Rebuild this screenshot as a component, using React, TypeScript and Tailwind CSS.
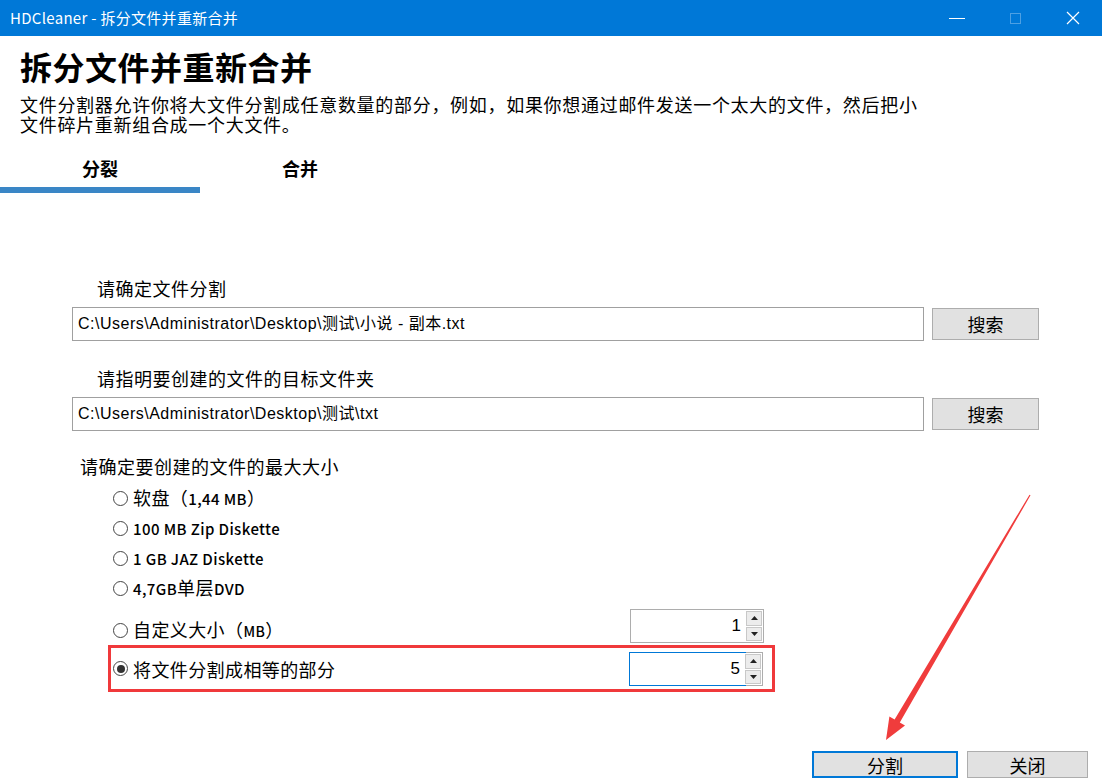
import React from 'react';

const cjk = "font-['Microsoft_YaHei','Noto_Sans_CJK_SC',sans-serif]";
const mono = "font-['Liberation_Sans','Noto_Sans_CJK_SC',sans-serif]";

function Radio({ checked, label }: { checked?: boolean; label: React.ReactNode }) {
  return (
    <div className="flex items-center">
      <span className="flex h-[15px] w-[15px] items-center justify-center rounded-full border border-[#444] bg-white">
        {checked && <span className="h-[8px] w-[8px] rounded-full bg-[#333]" />}
      </span>
      <span className="ml-[5px] text-[18px] leading-[22px] tracking-[0.4px] text-black">{label}</span>
    </div>
  );
}

function Spinner({ value, focused }: { value: string; focused?: boolean }) {
  return (
    <div className="flex h-[34px] w-[134px] border border-[#adadad] bg-white">
      <div
        className={`flex flex-1 items-center justify-end pr-[5px] text-[17px] ${mono} ${
          focused ? 'border border-[#0078d7] -m-px' : ''
        }`}
      >
        {value}
      </div>
      <div className="flex w-[17px] flex-col gap-px bg-white py-px pr-px">
        <div className="flex flex-1 items-center justify-center border border-[#c8c8c8] bg-[#ececec]">
          <svg width="7" height="4" viewBox="0 0 7 4">
            <path d="M3.5 0 L7 4 L0 4 Z" fill="#222" />
          </svg>
        </div>
        <div className="flex flex-1 items-center justify-center border border-[#c8c8c8] bg-[#ececec]">
          <svg width="7" height="4" viewBox="0 0 7 4">
            <path d="M0 0 L7 0 L3.5 4 Z" fill="#222" />
          </svg>
        </div>
      </div>
    </div>
  );
}

function PathRow({ value }: { value: string }) {
  return (
    <div className="flex items-center">
      <div className={`ml-[72px] flex h-[34px] w-[852px] items-center border border-[#a0a0a0] bg-white pl-[5px] text-[16px] tracking-[0.5px] text-black ${mono}`}>
        {value}
      </div>
      <button className="ml-[8px] h-[32px] w-[107px] border border-[#adadad] bg-[#e1e1e1] text-[18px] text-black">
        搜索
      </button>
    </div>
  );
}

export default function App() {
  return (
    <div className={`relative h-[781px] w-[1102px] overflow-hidden bg-white ${cjk}`}>
      {/* 标题栏 */}
      <div className="flex h-[36px] items-center bg-[#0078d7] text-white">
        <span className="pl-[10px] text-[15px] tracking-[0.3px]">HDCleaner - 拆分文件并重新合并</span>
        <div className="ml-auto flex h-full">
          <div className="flex w-[58px] items-center justify-center">
            <span className="mt-[1px] h-px w-[16px] bg-white" />
          </div>
          <div className="flex w-[58px] items-center justify-center">
            <span className="h-[11px] w-[11px] border border-white/30" />
          </div>
          <div className="flex w-[58px] items-center justify-center">
            <svg width="14" height="14" viewBox="0 0 14 14">
              <path d="M1 1 L13 13 M13 1 L1 13" stroke="white" strokeWidth="1.2" />
            </svg>
          </div>
        </div>
      </div>

      {/* 标题与说明 */}
      <h1 className="mt-[12px] pl-[20px] text-[32px] font-bold leading-[36px] tracking-[0.5px] text-black">拆分文件并重新合并</h1>
      <p className="mt-[10px] pl-[20px] text-[18px] leading-[20px] tracking-[0.7px] text-black">
        文件分割器允许你将大文件分割成任意数量的部分，例如，如果你想通过邮件发送一个太大的文件，然后把小
        <br />
        文件碎片重新组合成一个大文件。
      </p>

      {/* 选项卡 */}
      <div className="mt-[24px] flex">
        <div className="flex w-[200px] flex-col">
          <span className="text-center text-[18px] font-bold leading-[20px] text-black">分裂</span>
          <span className="mt-[9px] h-[6px] bg-[#3a86c6]" />
        </div>
        <div className="flex w-[200px] flex-col">
          <span className="text-center text-[18px] font-bold leading-[20px] text-black">合并</span>
        </div>
      </div>

      {/* 表单 */}
      <div className="mt-[83px] pl-[97px] text-[18px] leading-[24px] tracking-[0.5px] text-black">请确定文件分割</div>
      <div className="mt-[7px]">
        <PathRow value="C:\Users\Administrator\Desktop\测试\小说 - 副本.txt" />
      </div>
      <div className="mt-[25px] pl-[97px] text-[18px] leading-[24px] tracking-[0.5px] text-black">请指明要创建的文件的目标文件夹</div>
      <div className="mt-[7px]">
        <PathRow value="C:\Users\Administrator\Desktop\测试\txt" />
      </div>

      <div className="mt-[23px] pl-[80px] text-[18px] leading-[24px] tracking-[0.5px] text-black">请确定要创建的文件的最大大小</div>
      <div className="mt-[5px] flex flex-col pl-[113px]">
        <div className="flex h-[30px] items-center">
          <Radio label={<>软盘（<span className="text-[15px] font-medium">1,44 MB</span>）</>} />
        </div>
        <div className="flex h-[30px] items-center">
          <Radio label={<span className="text-[15px] font-medium">100 MB Zip Diskette</span>} />
        </div>
        <div className="flex h-[30px] items-center">
          <Radio label={<span className="text-[15px] font-medium">1 GB JAZ Diskette</span>} />
        </div>
        <div className="flex h-[30px] items-center">
          <Radio
            label={
              <>
                <span className="text-[15px] font-medium">4,7GB</span>单层<span className="text-[15px] font-medium">DVD</span>
              </>
            }
          />
        </div>
      </div>

      <div className="mt-[6px] ml-[108px] flex w-[667px] items-start pl-[5px] pr-[11px]">
        <div className="mt-[9px]">
          <Radio label={<>自定义大小（<span className="text-[14px] font-medium">MB</span>）</>} />
        </div>
        <div className="ml-auto">
          <Spinner value="1" />
        </div>
      </div>

      <div className="mt-[2px] ml-[108px] flex h-[47px] w-[667px] items-center border-[3px] border-[#f0393b] pl-[2px] pr-[9px]">
        <Radio checked label="将文件分割成相等的部分" />
        <div className="ml-auto mt-px">
          <Spinner value="5" focused />
        </div>
      </div>

      {/* 底部按钮 */}
      <div className="mt-[59px] flex justify-end gap-[9px] pr-[14px]">
        <button className="h-[27px] w-[146px] border-2 border-[#0078d7] bg-[#e1e1e1] text-[18px] leading-none text-black">
          分割
        </button>
        <button className="h-[27px] w-[121px] border border-[#adadad] bg-[#e1e1e1] text-[18px] leading-none text-black">
          关闭
        </button>
      </div>

      {/* 红色箭头标注 */}
      <svg className="pointer-events-none absolute left-0 top-0" width="1102" height="781" viewBox="0 0 1102 781">
        <polygon
          points="1030.5,495.3 899.8,722.5 905,725.6 886,740 889.4,716.4 894.6,719.5 1029.5,494.7"
          fill="#f03c3c"
        />
      </svg>
    </div>
  );
}
